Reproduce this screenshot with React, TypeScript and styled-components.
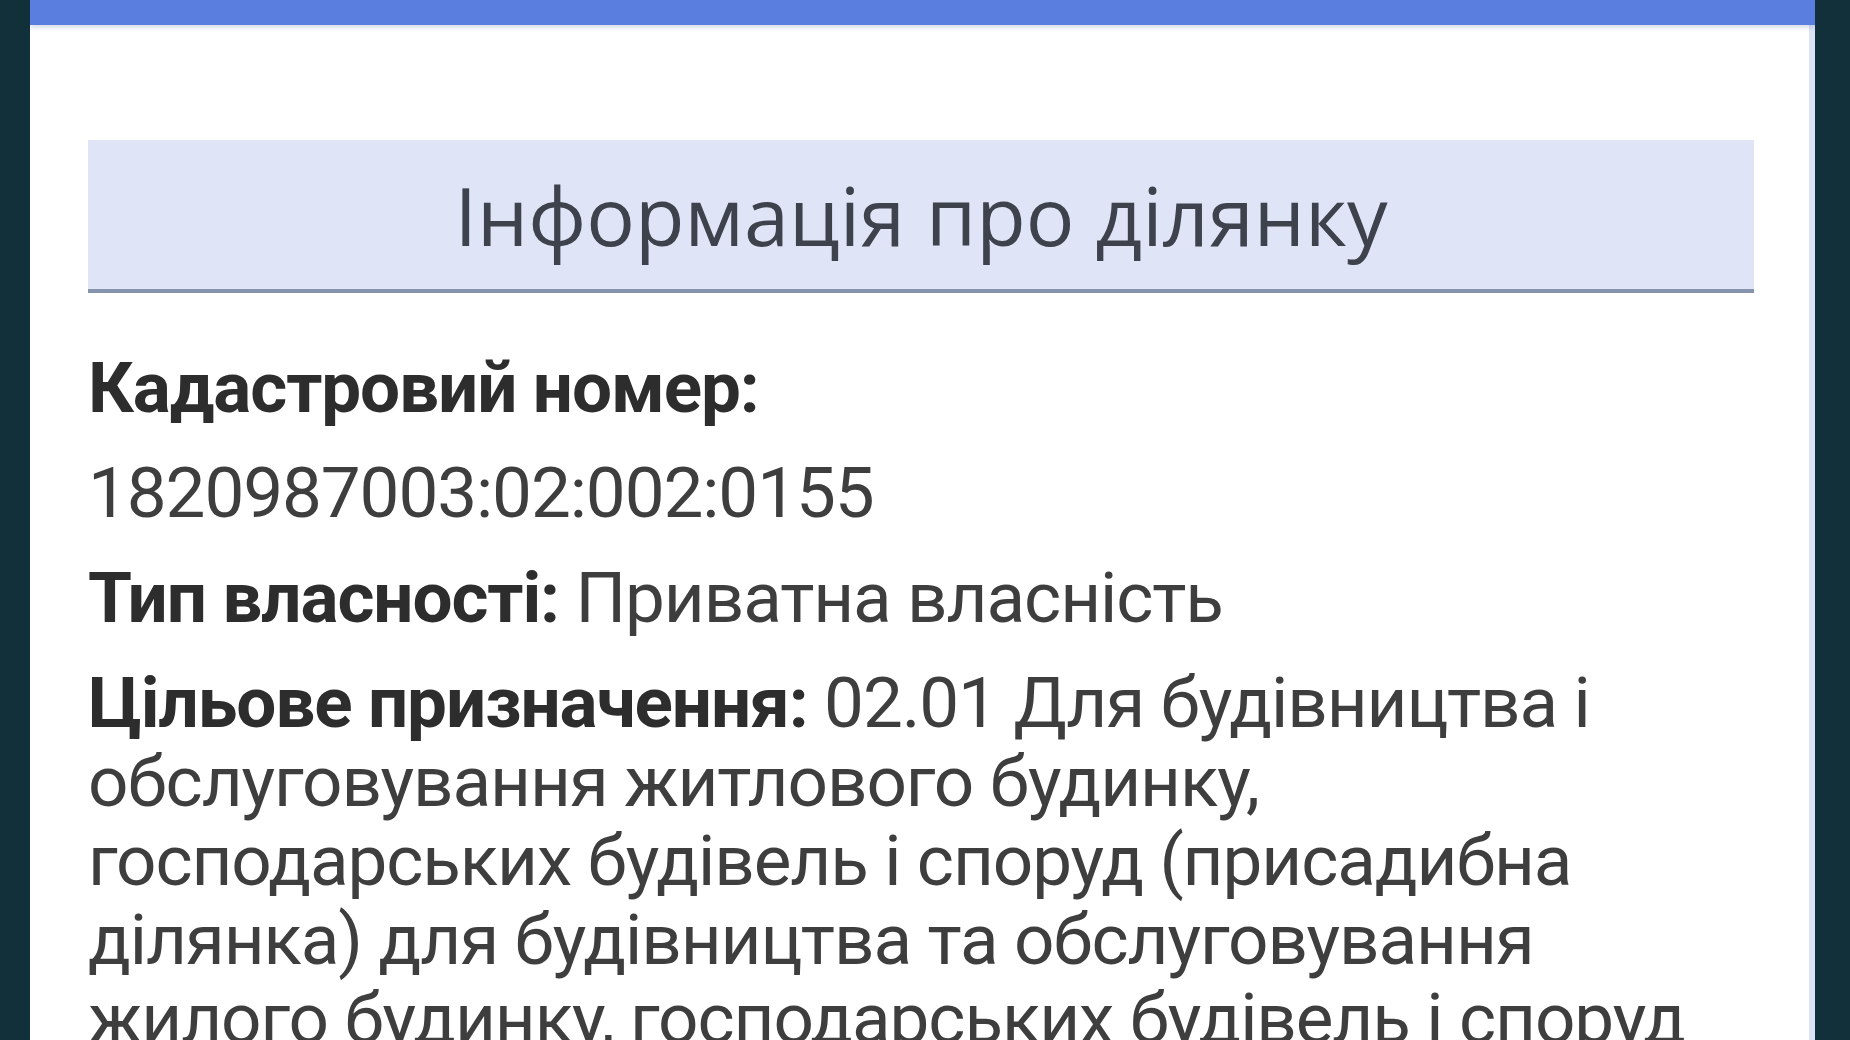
import React from "react";
import styled, { createGlobalStyle } from "styled-components";

const GlobalStyle = createGlobalStyle`
  html, body {
    margin: 0;
    padding: 0;
    height: 100%;
    overflow: hidden;
    background: #12303a;
  }
  #root {
    height: 100%;
  }
`;

const Screen = styled.div`
  box-sizing: border-box;
  height: 1040px;
  display: flex;
  padding: 0 35px 0 30px;
  background: #12303a;
`;

const Sheet = styled.main`
  flex: 1;
  display: flex;
  flex-direction: column;
  background: #ffffff;
  box-shadow: inset -6px 0 0 #dce3f6;
  overflow: hidden;
`;

const TopBar = styled.div`
  flex: none;
  height: 25px;
  background: #5a7ee0;
  box-shadow: 0 2px 5px rgba(50, 70, 130, 0.22);
`;

const Content = styled.section`
  padding: 115px 61px 0 58px;
`;

const TitleBand = styled.h2`
  margin: 0;
  height: 149px;
  display: flex;
  align-items: center;
  justify-content: center;
  background: #dfe5f7;
  border-bottom: 4px solid #8593ad;
  font-family: "Open Sans", "Noto Sans", sans-serif;
  font-weight: 400;
  font-size: 81px;
  color: #3e424c;
`;

const Fields = styled.div`
  margin-top: 55px;
  display: flex;
  flex-direction: column;
  gap: 26px;
  font-family: Roboto, "Liberation Sans", sans-serif;
  font-size: 71px;
  letter-spacing: -1.1px;
  line-height: 79px;
  color: #3e3e3e;
`;

const Field = styled.p`
  margin: 0;
  white-space: nowrap;
`;

const Label = styled.span`
  font-weight: 700;
  color: #2d2d2d;
`;

export default function App() {
  return (
    <>
      <GlobalStyle />
      <Screen>
        <Sheet>
          <TopBar />
          <Content>
            <TitleBand>Інформація про ділянку</TitleBand>
            <Fields>
              <Field>
                <Label>Кадастровий номер:</Label>
              </Field>
              <Field>1820987003:02:002:0155</Field>
              <Field>
                <Label>Тип власності:</Label> Приватна власність
              </Field>
              <Field>
                <Label>Цільове призначення:</Label> 02.01 Для будівництва і
                <br />
                обслуговування житлового будинку,
                <br />
                господарських будівель і споруд (присадибна
                <br />
                ділянка) для будівництва та обслуговування
                <br />
                жилого будинку, господарських будівель і споруд
                <br />
                (присадибна ділянка)
              </Field>
            </Fields>
          </Content>
        </Sheet>
      </Screen>
    </>
  );
}
